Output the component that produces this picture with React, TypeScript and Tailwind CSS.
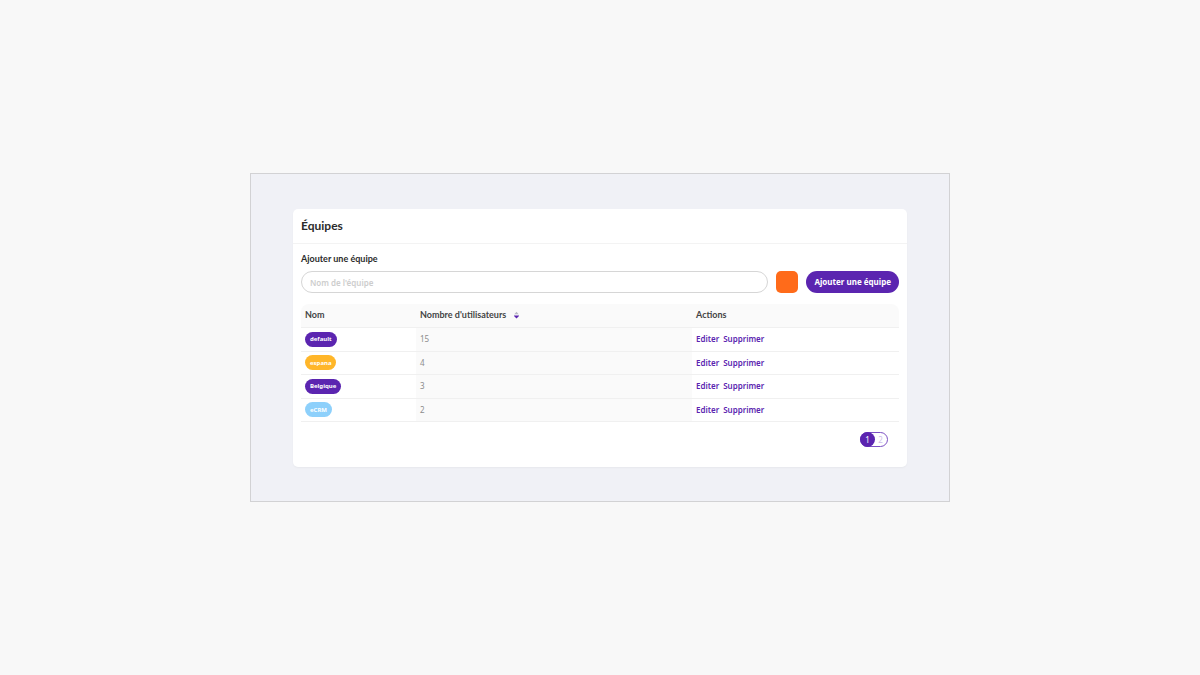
import React, { useState } from 'react';

interface Team {
  id: number;
  name: string;
  userCount: number;
  badgeClass: string;
}

const teams: Team[] = [
  { id: 1, name: 'default', userCount: 15, badgeClass: 'bg-[#5b25b0]' },
  { id: 2, name: 'espana', userCount: 4, badgeClass: 'bg-[#ffb629]' },
  { id: 3, name: 'Belgique', userCount: 3, badgeClass: 'bg-[#5b25b0]' },
  { id: 4, name: 'eCRM', userCount: 2, badgeClass: 'bg-[#8dd0fb]' },
];

const headingFont = "font-['Lato',sans-serif]";

const SortIcon: React.FC = () => (
  <svg viewBox="0 0 5 8" className="w-[5px] h-2" aria-hidden="true">
    <path d="M0.3 3.2 L2.5 0.8 L4.7 3.2 Z" fill="#b9b9c2" />
    <path d="M0 4.4 H5 V5 L2.5 7.4 L0 5 Z" fill="#5b25b0" />
  </svg>
);

const AddTeamForm: React.FC = () => {
  const [name, setName] = useState('');
  const [color, setColor] = useState('#ff6b1a');

  return (
    <form onSubmit={(e) => e.preventDefault()}>
      <label
        htmlFor="team-name"
        className={`${headingFont} block text-[9px] leading-3 font-bold text-[#2b2b2b]`}
      >
        Ajouter une équipe
      </label>
      <div className="flex items-center gap-2 mt-[6px]">
        <input
          id="team-name"
          type="text"
          value={name}
          onChange={(e) => setName(e.target.value)}
          placeholder="Nom de l'équipe"
          className="flex-1 min-w-0 h-[22px] px-2 rounded-full border border-[#d6d6d6] bg-white text-[8px] font-semibold text-[#444444] placeholder:text-[#cdcdcd] outline-none"
        />
        <input
          type="color"
          aria-label="Couleur de l'équipe"
          value={color}
          onChange={(e) => setColor(e.target.value)}
          className="w-[22px] h-[22px] shrink-0 appearance-none rounded-[5px] overflow-hidden cursor-pointer [&::-webkit-color-swatch-wrapper]:p-0 [&::-webkit-color-swatch]:border-0"
        />
        <button
          type="submit"
          className="h-[22px] px-2 shrink-0 rounded-full bg-[#5b25b0] text-[8px] font-bold text-white cursor-pointer"
        >
          Ajouter une équipe
        </button>
      </div>
    </form>
  );
};

const TeamsTable: React.FC = () => (
  <table className="w-full h-[118px] mt-[11px] table-fixed border-separate border-spacing-0 text-left">
    <thead className={`${headingFont} text-[9px] leading-3 text-[#444444]`}>
      <tr className="h-6">
        <th className="w-[115px] px-1 pt-0 pb-px bg-[#fafafa] border-b border-[#f0f0f0] rounded-tl-lg font-bold">
          Nom
        </th>
        <th className="w-[276px] px-1 pt-0 pb-px bg-[#fafafa] border-b border-[#f0f0f0] font-bold">
          <button type="button" className="flex items-center gap-2 cursor-pointer">
            Nombre d'utilisateurs
            <SortIcon />
          </button>
        </th>
        <th className="px-1 pt-0 pb-px bg-[#fafafa] border-b border-[#f0f0f0] rounded-tr-lg font-bold">
          Actions
        </th>
      </tr>
    </thead>
    <tbody className="text-[8px] leading-3">
      {teams.map((team) => (
        <tr key={team.id} className="h-[23px]">
          <td className="px-1 py-0 border-b border-[#f0f0f0]">
            <span
              className={`inline-flex items-center h-[15px] px-[5px] rounded-full align-middle text-[6px] font-bold text-white ${team.badgeClass}`}
            >
              {team.name}
            </span>
          </td>
          <td className="px-1 py-0 border-b border-[#f0f0f0] bg-[#fafafa] text-[#8c8c8c]">
            {team.userCount}
          </td>
          <td className="px-1 py-0 border-b border-[#f0f0f0]">
            <div className="flex gap-1 font-semibold text-[#5b25b0]">
              <a href="#editer">Editer</a>
              <a href="#supprimer">Supprimer</a>
            </div>
          </td>
        </tr>
      ))}
    </tbody>
  </table>
);

const Pagination: React.FC = () => {
  const [page, setPage] = useState(1);

  return (
    <nav aria-label="Pagination" className="flex justify-end mt-[10px] pr-[11px]">
      <div className="flex w-7 h-[15px] rounded-full border border-[#7d52c4] text-[8px]">
        {[1, 2].map((n) => (
          <button
            key={n}
            type="button"
            onClick={() => setPage(n)}
            className={`flex-1 flex items-center justify-center rounded-full cursor-pointer ${
              page === n ? 'bg-[#5b25b0] text-white ring-1 ring-[#5b25b0]' : 'text-[#cdbbea]'
            }`}
          >
            {n}
          </button>
        ))}
      </div>
    </nav>
  );
};

export default function App() {
  return (
    <div className="min-h-screen flex items-center justify-center bg-[#f8f8f8] font-['Noto_Sans',sans-serif]">
      <main className="w-full max-w-[700px] px-[42px] pt-[35px] pb-[34px] border border-[#d2d2d4] bg-[#f0f1f6]">
        <section className="rounded-[5px] bg-white shadow-[0_1px_2px_rgba(0,0,0,0.04)]">
          <header className="px-2 py-[9px] border-b border-[#f3f3f3]">
            <h1 className={`${headingFont} text-xs leading-4 font-bold text-[#2b2b2b]`}>Équipes</h1>
          </header>
          <div className="px-2 pt-[9px] pb-5">
            <AddTeamForm />
            <TeamsTable />
            <Pagination />
          </div>
        </section>
      </main>
    </div>
  );
}
